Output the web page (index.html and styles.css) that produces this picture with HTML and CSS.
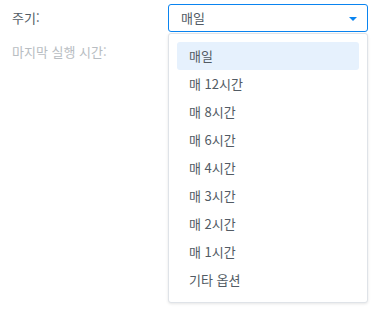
FILE: index.html
```html
<!DOCTYPE html>
<html lang="ko">
<head>
<meta charset="utf-8">
<link rel="stylesheet" href="styles.css">
</head>
<body>
<div class="form">
  <div class="row">
    <div class="label">주기:</div>
    <div class="field">
      <div class="select">
        <span class="value">매일</span>
        <span class="arrow"></span>
      </div>
      <ul class="menu">
        <li class="item selected">매일</li>
        <li class="item">매 12시간</li>
        <li class="item">매 8시간</li>
        <li class="item">매 6시간</li>
        <li class="item">매 4시간</li>
        <li class="item">매 3시간</li>
        <li class="item">매 2시간</li>
        <li class="item">매 1시간</li>
        <li class="item">기타 옵션</li>
      </ul>
    </div>
  </div>
  <div class="row">
    <div class="label disabled">마지막 실행 시간:</div>
    <div class="field"></div>
  </div>
</div>
</body>
</html>
```
FILE: styles.css
```css
html, body {
  margin: 0;
  padding: 0;
  background: #ffffff;
  min-height: 313px;
}
body {
  font-family: "Noto Sans CJK KR", "Noto Sans", sans-serif;
  font-size: 13px;
  color: #525b64;
}
.form {
  padding: 4px 0 0 12px;
  display: flex;
  flex-direction: column;
  gap: 6px;
}
.row {
  display: flex;
  align-items: center;
  height: 28px;
}
.label {
  width: 156px;
  flex: none;
  line-height: 28px;
}
.label.disabled {
  color: #b8bdc2;
}
.field {
  position: relative;
  width: 200px;
  height: 28px;
}
.select {
  box-sizing: border-box;
  height: 28px;
  border: 1px solid #0a84f0;
  border-radius: 3px;
  display: flex;
  align-items: center;
  justify-content: space-between;
  padding: 0 10px 0 12px;
}
.value {
  line-height: 26px;
}
.arrow {
  width: 0;
  height: 0;
  border-left: 4px solid transparent;
  border-right: 4px solid transparent;
  border-top: 4px solid #0a84f0;
  margin-top: 1px;
}
.menu {
  position: absolute;
  z-index: 10;
  top: 29px;
  left: 0;
  box-sizing: border-box;
  width: 200px;
  margin: 0;
  padding: 8px;
  list-style: none;
  background: #ffffff;
  border: 1px solid #dfe3e8;
  border-radius: 3px;
  box-shadow: 0 1px 3px rgba(0, 0, 0, 0.1);
}
.item {
  height: 28px;
  line-height: 28px;
  padding: 0 12px;
  border-radius: 3px;
}
.item.selected {
  background: #e6f1fd;
}
```
